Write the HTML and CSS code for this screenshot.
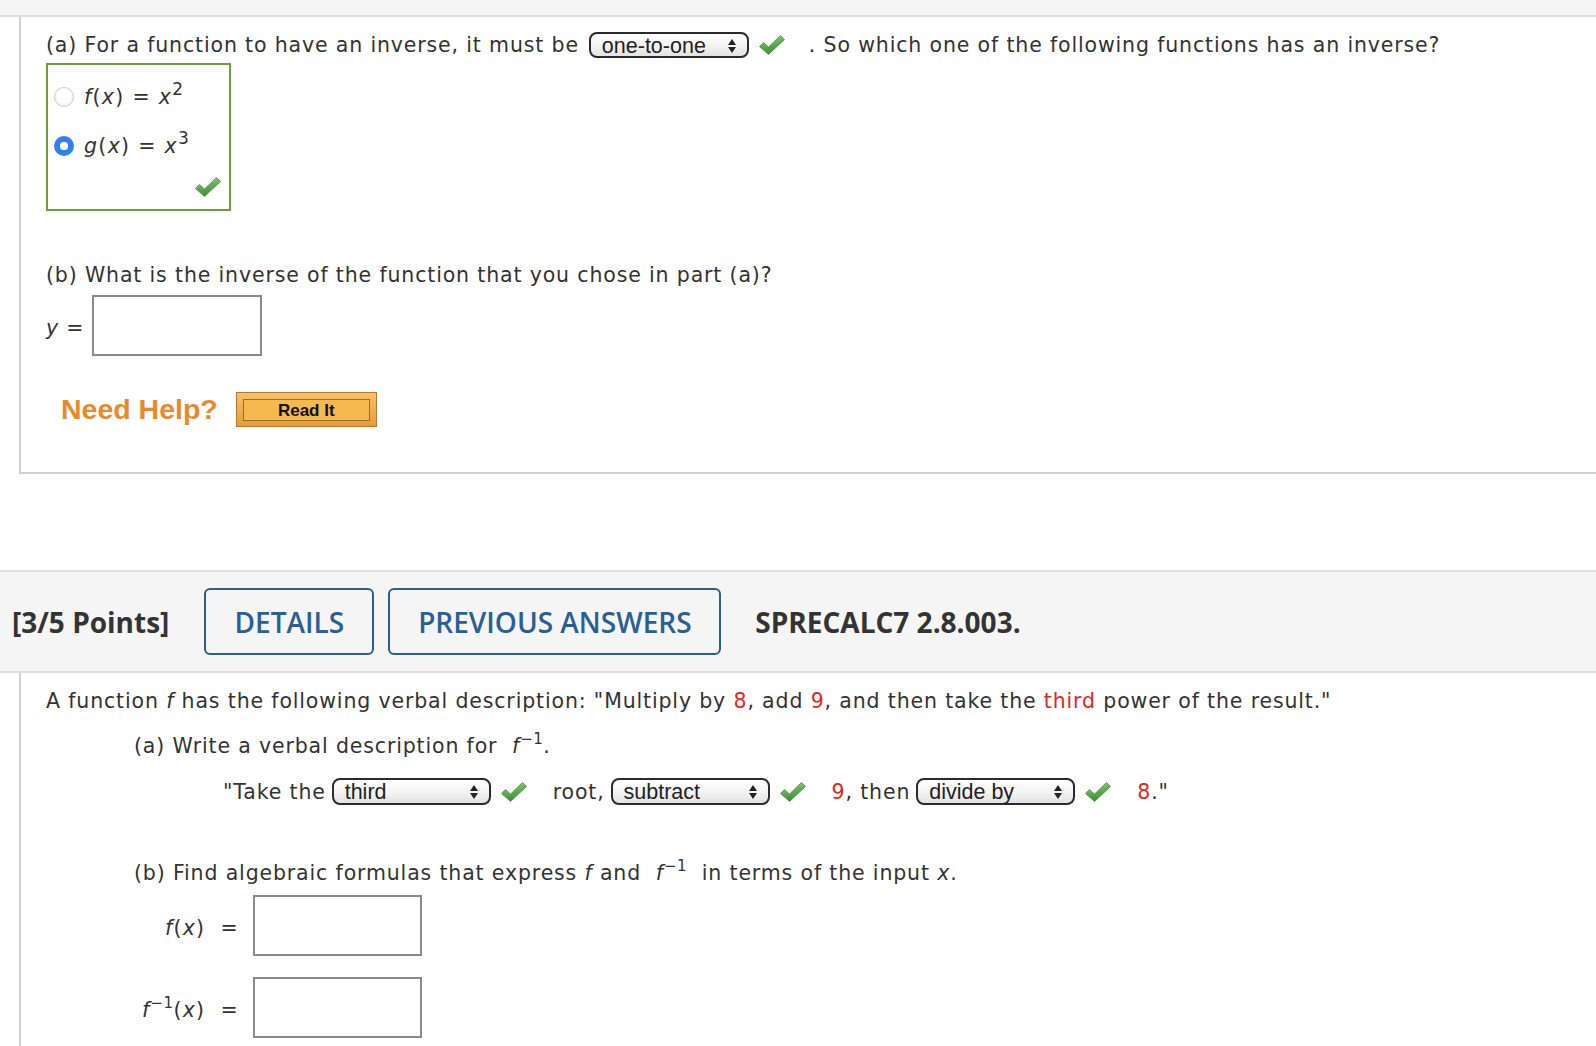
FILE: index.html
```html
<!DOCTYPE html>
<html lang="en">
<head>
<meta charset="utf-8">
<title>Inverse functions</title>
<link rel="stylesheet" href="styles.css">
</head>
<body>
<svg class="defs" width="0" height="0" aria-hidden="true">
  <defs>
    <linearGradient id="chkg" x1="0" y1="0" x2="0.3" y2="1">
      <stop offset="0" stop-color="#9ad68a"/>
      <stop offset="0.55" stop-color="#5fae52"/>
      <stop offset="1" stop-color="#3d8a36"/>
    </linearGradient>
    <symbol id="chk" viewBox="0 0 28 22">
      <path d="M1.5 12.5 L5.5 8.5 L10.5 13 L22.5 1.5 L26.5 5.5 L10.5 20.5 Z" fill="url(#chkg)" stroke="#4c8f43" stroke-width="0.8" stroke-linejoin="round"/>
    </symbol>
    <symbol id="arr" viewBox="0 0 8 14">
      <path d="M0 6 L4 0 L8 6 Z M0 8 L4 14 L8 8 Z" fill="#222"/>
    </symbol>
  </defs>
</svg>

<div class="topbar"></div>

<div class="panel panel1">
  <div class="line">
    <span>(a) For a function to have an inverse, it must be</span>
    <span class="sel sel-a"><span>one-to-one</span><svg class="arr"><use href="#arr"/></svg></span>
    <svg class="chk"><use href="#chk"/></svg>
    <span class="after-a">. So which one of the following functions has an inverse?</span>
  </div>

  <div class="choices">
    <div class="choice"><span class="radio"></span><span class="math"><i>f</i>(<i>x</i>) = <i>x</i><sup>2</sup></span></div>
    <div class="choice choice2"><span class="radio on"></span><span class="math"><i>g</i>(<i>x</i>) = <i>x</i><sup>3</sup></span></div>
    <div class="boxcheck"><svg class="chk"><use href="#chk"/></svg></div>
  </div>

  <div class="line qb">(b) What is the inverse of the function that you chose in part (a)?</div>

  <div class="answer">
    <span class="ylbl"><i>y</i> =</span>
    <span class="inputbox"></span>
  </div>

  <div class="help">
    <span class="need">Need Help?</span>
    <span class="readit"><span class="readit-in">Read It</span></span>
  </div>
</div>

<div class="qhead">
  <span class="pts">[3/5 Points]</span>
  <span class="btn btn-details">DETAILS</span>
  <span class="btn btn-prev">PREVIOUS ANSWERS</span>
  <span class="code">SPRECALC7 2.8.003.</span>
</div>

<div class="panel panel2">
  <div class="line"><span>A function <i>f</i> has the following verbal description: "Multiply by <span class="red">8</span>, add <span class="red">9</span>, and then take the <span class="red">third</span> power of the result."</span></div>

  <div class="line sub"><span>(a) Write a verbal description for&nbsp; <i>f</i><sup class="inv">−1</sup>.</span></div>

  <div class="line row-sel">
    <span>"Take the</span>
    <span class="sel sel-b"><span>third</span><svg class="arr"><use href="#arr"/></svg></span>
    <svg class="chk"><use href="#chk"/></svg>
    <span class="gap-l">root,</span>
    <span class="sel sel-b"><span>subtract</span><svg class="arr"><use href="#arr"/></svg></span>
    <svg class="chk"><use href="#chk"/></svg>
    <span class="gap-l"><span class="red">9</span>, then</span>
    <span class="sel sel-b"><span>divide by</span><svg class="arr"><use href="#arr"/></svg></span>
    <svg class="chk"><use href="#chk"/></svg>
    <span class="gap-l"><span class="red">8</span>."</span>
  </div>

  <div class="line sub subb"><span>(b) Find algebraic formulas that express <i>f</i> and&nbsp; <i>f</i><sup class="inv">−1</sup>&nbsp; in terms of the input <i>x</i>.</span></div>

  <div class="formula">
    <span class="flbl"><i>f</i>(<i>x</i>)&nbsp;&nbsp;=</span>
    <span class="inputbox"></span>
  </div>
  <div class="formula formula2">
    <span class="flbl"><i>f</i><sup class="inv">−1</sup>(<i>x</i>)&nbsp;&nbsp;=</span>
    <span class="inputbox"></span>
  </div>
</div>
</body>
</html>
```

FILE: styles.css
```css
* {
  box-sizing: border-box;
}

body {
  margin: 0;
  background: #ffffff;
  font-family: "DejaVu Sans", Verdana, sans-serif;
  font-size: 20.5px;
  letter-spacing: 0.85px;
  color: #333333;
  overflow: hidden;
}

.defs {
  position: absolute;
  width: 0;
  height: 0;
}

i {
  font-style: italic;
}

.red {
  color: #e4261f;
}

.topbar {
  height: 17px;
  background: #f5f5f5;
  border-bottom: 2px solid #dedede;
}

.panel {
  margin-left: 19px;
  border-left: 2px solid #cfcfcf;
  padding-left: 25px;
}

.panel1 {
  border-bottom: 2px solid #cfcfcf;
  padding-top: 15px;
  padding-bottom: 45px;
}

.line {
  display: flex;
  align-items: center;
  height: 26px;
  line-height: 26px;
  white-space: nowrap;
}

/* selects */
.sel {
  display: inline-flex;
  align-items: center;
  justify-content: space-between;
  height: 26px;
  border: 2px solid #2b2b2b;
  border-radius: 8px;
  background: linear-gradient(#ffffff, #f4f4f4 50%, #e2e2e2);
  padding: 1px 11px 0 11px;
  font-family: "Liberation Sans", Arial, sans-serif;
  font-size: 21.5px;
  letter-spacing: 0;
  color: #222222;
}

.sel-a {
  width: 160px;
  margin-left: 10px;
}

.sel-b {
  width: 159px;
  height: 27px;
  margin-left: 6px;
}

.arr {
  width: 8px;
  height: 14px;
}

.chk {
  width: 28px;
  height: 22px;
  margin-left: 9px;
  flex: none;
}

.after-a {
  margin-left: 23px;
}

/* choices */
.choices {
  margin-top: 5px;
  width: 185px;
  height: 148px;
  border: 2px solid #6b9e3f;
  padding: 17px 7px 0 6px;
}

.choice {
  display: flex;
  align-items: center;
  height: 30px;
}

.choice2 {
  margin-top: 19px;
}

.radio {
  width: 20px;
  height: 20px;
  border-radius: 50%;
  border: 1px solid #c9c9c9;
  background: radial-gradient(circle at 50% 40%, #ffffff 40%, #ececec);
  margin-right: 10px;
  flex: none;
}

.radio.on {
  border: none;
  background: radial-gradient(circle, #ffffff 0 4px, #2f7ff5 4.5px);
}

.math {
  letter-spacing: 1.3px;
}

.math sup {
  font-size: 17px;
  vertical-align: 9px;
  line-height: 0;
}

.boxcheck {
  display: flex;
  justify-content: flex-end;
  margin-top: 15px;
}

.boxcheck .chk {
  margin-left: 0;
}

.qb {
  margin-top: 51px;
}

.answer {
  display: flex;
  align-items: center;
  margin-top: 7px;
}

.ylbl {
  width: 46px;
  padding-top: 4px;
}

.inputbox {
  width: 170px;
  height: 61px;
  border: 2px solid #8a8a8a;
  background: #ffffff;
}

.help {
  display: flex;
  align-items: center;
  margin-top: 36px;
  padding-left: 15px;
}

.need {
  font-family: "Liberation Sans", Arial, sans-serif;
  font-weight: 700;
  font-size: 28.5px;
  letter-spacing: 0;
  color: #e8892e;
}

.readit {
  display: flex;
  margin-left: 18px;
  width: 141px;
  height: 35px;
  border: 1px solid #b87a30;
  background: linear-gradient(#f7c16a, #e89a3a);
  padding: 6px 6px 5px 6px;
}

.readit-in {
  flex: 1;
  display: flex;
  align-items: center;
  justify-content: center;
  padding-top: 2px;
  border: 1px solid #9c6b2c;
  background: #f4b94f;
  font-family: "Liberation Sans", Arial, sans-serif;
  font-weight: 700;
  font-size: 17px;
  letter-spacing: 0;
  color: #111111;
}

/* question header */
.qhead {
  margin-top: 96px;
  height: 103px;
  border-top: 2px solid #dedede;
  border-bottom: 2px solid #dedede;
  background: #f5f5f5;
  display: flex;
  align-items: center;
  padding-left: 12px;
  font-family: "Open Sans", "Noto Sans", sans-serif;
  letter-spacing: 0;
}

.pts,
.code {
  font-weight: 700;
  font-size: 28px;
  color: #333333;
}

.btn {
  height: 67px;
  border: 2px solid #2b5f94;
  border-radius: 6px;
  display: flex;
  align-items: center;
  justify-content: center;
  color: #2b5f94;
  font-weight: 600;
  font-size: 28px;
}

.btn-details {
  width: 170px;
  margin-left: 35px;
}

.btn-prev {
  width: 333px;
  margin-left: 14px;
}

.code {
  margin-left: 34px;
}

/* second panel */
.panel2 {
  padding-top: 15px;
  height: 400px;
}

.sub {
  margin-top: 19px;
  margin-left: 88px;
}

sup.inv {
  font-size: 15px;
  font-style: normal;
  vertical-align: 9px;
  line-height: 0;
  letter-spacing: 0.5px;
}

.row-sel {
  margin-top: 19px;
  margin-left: 177px;
  height: 27px;
}

.gap-l {
  margin-left: 25px;
}

.subb {
  margin-top: 55px;
}

.formula {
  display: flex;
  align-items: center;
  margin-top: 9px;
  margin-left: 88px;
}

.formula2 {
  margin-top: 21px;
}

.flbl {
  width: 119px;
  padding-right: 14px;
  text-align: right;
  padding-top: 4px;
  letter-spacing: 1.2px;
}

.formula .inputbox {
  width: 169px;
}
```
